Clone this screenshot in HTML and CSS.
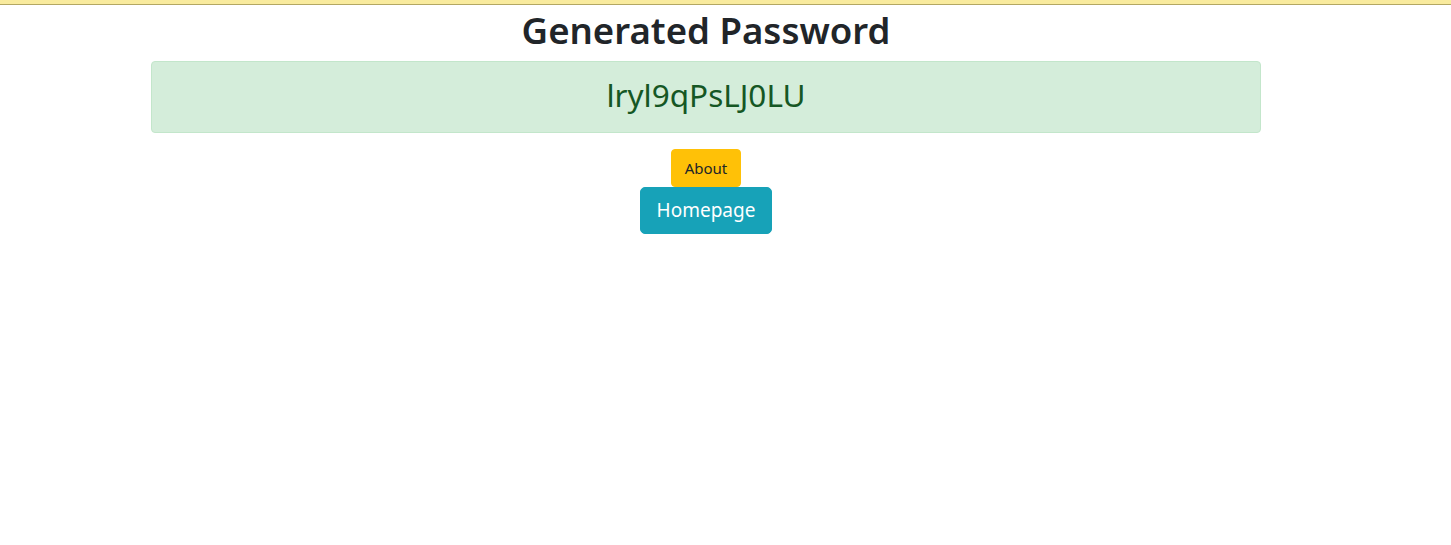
FILE: index.html
```html
<!DOCTYPE html>
<html>
<head>
<meta charset="utf-8">
<link rel="stylesheet" href="styles.css">
</head>
<body>
<div class="topbar"></div>
<div class="page">
  <div class="container">
    <h1 class="title">Generated Password</h1>
    <div class="alert"><h2 class="password">lryl9qPsLJ0LU</h2></div>
    <div class="actions">
      <a class="btn btn-about" href="#">About</a>
      <a class="btn btn-home" href="#">Homepage</a>
    </div>
  </div>
</div>
</body>
</html>
```
FILE: styles.css
```css
* { box-sizing: border-box; }
html, body { margin: 0; padding: 0; background: #fff; }
body {
  font-family: "Noto Sans", "Open Sans", sans-serif;
  color: #212529;
}
.topbar {
  height: 5px;
  background: #f9eb9e;
  border-bottom: 1px solid #b3a763;
}
.page { width: 1412px; }
.container {
  width: 1110px;
  margin: 0 auto;
  display: flex;
  flex-direction: column;
  align-items: center;
}
.title {
  margin: 0 0 8px;
  font-size: 36.6px;
  font-weight: 600;
  line-height: 50px;
  height: 48px;
}
.alert {
  width: 100%;
  height: 72px;
  background: #d4edda;
  border: 1px solid #c3e6cb;
  border-radius: 4px;
  padding: 14px 20px 0;
  text-align: center;
  margin-bottom: 16px;
}
.password {
  margin: 0;
  color: #155724;
  font-size: 31.5px;
  font-weight: 400;
  line-height: 38px;
}
.actions {
  display: flex;
  flex-direction: column;
  align-items: center;
}
.btn {
  display: inline-block;
  text-decoration: none;
  border-radius: 4px;
  border: 1px solid transparent;
  text-align: center;
}
.btn-about {
  background: #ffc107;
  border-color: #ffc107;
  color: #212529;
  font-size: 15px;
  line-height: 24px;
  padding: 6px 0;
  width: 70px;
  height: 38px;
}
.btn-home {
  background: #17a2b8;
  border-color: #17a2b8;
  color: #fff;
  font-size: 19px;
  line-height: 30px;
  padding: 7px 0;
  width: 132px;
  height: 47px;
  border-radius: 5px;
}
```
